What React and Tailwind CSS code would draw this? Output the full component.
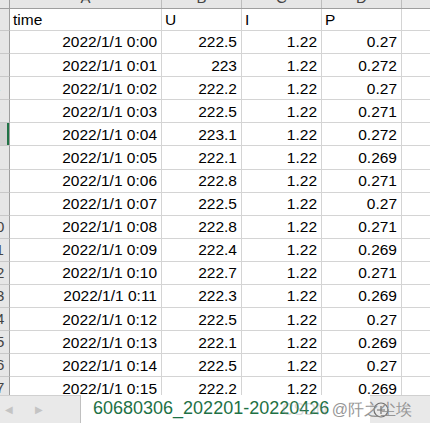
const rows = [
    ['0:00', '222.5', '1.22', '0.27'],
    ['0:01', '223', '1.22', '0.272'],
    ['0:02', '222.2', '1.22', '0.27'],
    ['0:03', '222.5', '1.22', '0.271'],
    ['0:04', '223.1', '1.22', '0.272'],
    ['0:05', '222.1', '1.22', '0.269'],
    ['0:06', '222.8', '1.22', '0.271'],
    ['0:07', '222.5', '1.22', '0.27'],
    ['0:08', '222.8', '1.22', '0.271'],
    ['0:09', '222.4', '1.22', '0.269'],
    ['0:10', '222.7', '1.22', '0.271'],
    ['0:11', '222.3', '1.22', '0.269'],
    ['0:12', '222.5', '1.22', '0.27'],
    ['0:13', '222.1', '1.22', '0.269'],
    ['0:14', '222.5', '1.22', '0.27'],
    ['0:15', '222.2', '1.22', '0.269'],
    ['0:16', '222.6', '1.22', '0.27'],
];

const cols = [
    { letter: 'A', w: 'w-[152px]' },
    { letter: 'B', w: 'w-[80px]' },
    { letter: 'C', w: 'w-[80px]' },
    { letter: 'D', w: 'w-[80px]' },
    { letter: 'E', w: 'w-[80px]' },
];

// only the right edge of the row-number column is scrolled into view
function RowHead({ n, active }) {
    return (
        <div
            className={`relative w-[10px] h-full shrink-0 overflow-hidden border-r border-r-[#9e9e9e] border-b border-b-[#c8c8c8] ${
                active ? 'bg-[#d2d2d2]' : 'bg-[#e6e6e6]'
            }`}
        >
            <span className="absolute left-[-17px] w-[26px] top-0 h-full flex items-center justify-center text-[15px] text-[#444]">
                {n}
            </span>
            {active && <div className="absolute right-0 top-0 h-full w-[2px] bg-[#217346]" />}
        </div>
    );
}

function Cell({ w, align = 'right', children }) {
    return (
        <div
            className={`${w} shrink-0 h-full border-r border-b border-[#d4d4d4] flex items-center overflow-hidden whitespace-nowrap ${
                align === 'right' ? 'justify-end pr-[4px]' : 'justify-start pl-[3px]'
            }`}
        >
            {children}
        </div>
    );
}

export default function App() {
    return (
        <div
            className="relative w-[430px] h-[423px] overflow-hidden bg-white flex flex-col text-[15.5px] text-black"
            style={{ fontFamily: '"Liberation Sans", Arial, sans-serif' }}
        >
            {/* grid */}
            <div className="flex-1 overflow-hidden">
                {/* column header, mostly scrolled off */}
                <div className="flex h-[9px] bg-[#e6e6e6] border-b border-[#9e9e9e]">
                    <div className="w-[10px] shrink-0 border-r border-[#9e9e9e]" />
                    {cols.map((c) => (
                        <div
                            key={c.letter}
                            className={`${c.w} shrink-0 border-r border-[#bdbdbd] overflow-hidden flex justify-center`}
                        >
                            <span className="-mt-[10px] text-[15px] leading-[15px] text-[#444]">{c.letter}</span>
                        </div>
                    ))}
                </div>

                {/* header row */}
                <div className="flex h-[22px]">
                    <RowHead n="1" />
                    <Cell w="w-[152px]" align="left">time</Cell>
                    <Cell w="w-[80px]" align="left">U</Cell>
                    <Cell w="w-[80px]" align="left">I</Cell>
                    <Cell w="w-[80px]" align="left">P</Cell>
                    <Cell w="w-[80px]" />
                </div>

                {rows.map((r, i) => (
                    <div key={r[0]} className="flex h-[23.1px]">
                        <RowHead n={String(i + 2)} active={i === 4} />
                        <Cell w="w-[152px]">2022/1/1 {r[0]}</Cell>
                        <Cell w="w-[80px]">{r[1]}</Cell>
                        <Cell w="w-[80px]">{r[2]}</Cell>
                        <Cell w="w-[80px]">{r[3]}</Cell>
                        <Cell w="w-[80px]" />
                    </div>
                ))}
            </div>

            {/* sheet tabs */}
            <div className="h-[28px] shrink-0 flex bg-[#e9e9e9]">
                <div className="w-[80px] shrink-0 border-t border-[#d0d0d0] flex items-center pl-[5px] gap-[22px] text-[10px] text-[#c4c4c4]">
                    <span>◀</span>
                    <span>▶</span>
                </div>
                <div className="w-[290px] shrink-0 bg-white border-l border-[#c0c0c0] flex flex-col">
                    <div className="flex-1 flex items-center pl-[12px] text-[18px] text-[#1e7145] whitespace-nowrap">
                        60680306_202201-20220426
                    </div>
                    <div className="h-[3px] mb-[1px] bg-[#217346]" />
                </div>
                <div className="flex-1 border-t border-[#d0d0d0] flex items-center pl-[2px]">
                    <svg width="18" height="18" viewBox="0 0 18 18" fill="none" stroke="#6f6f6f" strokeWidth="1.2">
                        <circle cx="9" cy="9" r="7" />
                        <path d="M9 5v8M5 9h8" />
                    </svg>
                </div>
            </div>

            {/* watermark overlay */}
            <div className="absolute left-[282px] top-[398px] text-[16px] text-[#8c8c8c] whitespace-nowrap pointer-events-none">
                <span className="opacity-30">CSDN </span>
                <span className="opacity-90">@阡之尘埃</span>
            </div>
        </div>
    );
}
